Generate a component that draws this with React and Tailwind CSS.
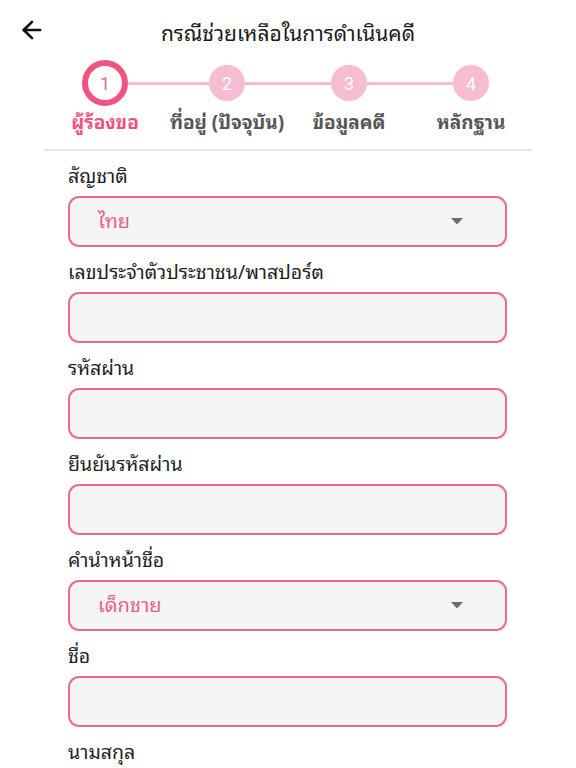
import React from 'react';
import { ArrowLeft } from 'lucide-react';

const steps = [
  { n: 1, label: 'ผู้ร้องขอ' },
  { n: 2, label: 'ที่อยู่ (ปัจจุบัน)' },
  { n: 3, label: 'ข้อมูลคดี' },
  { n: 4, label: 'หลักฐาน' },
];

const fields = [
  { label: 'สัญชาติ', select: 'ไทย' },
  { label: 'เลขประจำตัวประชาชน/พาสปอร์ต' },
  { label: 'รหัสผ่าน' },
  { label: 'ยืนยันรหัสผ่าน' },
  { label: 'คำนำหน้าชื่อ', select: 'เด็กชาย' },
  { label: 'ชื่อ' },
  { label: 'นามสกุล' },
];

const Caret = () => (
  <svg width="12" height="7" viewBox="0 0 12 7" className="mr-[42px]">
    <path d="M0 0 L12 0 L6 6.5 Z" fill="#6b6b6b" />
  </svg>
);

const Field = ({ label, select }) => (
  <div className="mt-[14px]">
    {/* looped thai sits low, so shorter leading lifts it a bit */}
    <div className="h-[26px] leading-[20px] text-[19.5px] text-[#1f1f1f] whitespace-nowrap">{label}</div>
    <div className="mt-[5px] h-[51px] rounded-[11px] border-2 border-[#ec6a91] bg-[#f4f4f4] flex items-center justify-between">
      {select && (
        <>
          <span className="pl-[28px] pb-[6px] text-[20px] leading-[26px] text-[#e9628c]">{select}</span>
          <Caret />
        </>
      )}
    </div>
  </div>
);

export default function App() {
  return (
    <div className="w-[576px] h-[768px] overflow-hidden bg-white font-['Noto_Sans_Thai_Looped','Noto_Sans_Thai',Roboto,sans-serif]">
      {/* header */}
      <div className="grid grid-cols-[64px_1fr_64px]">
        <div className="pl-[18px] pt-[16px]">
          <ArrowLeft size={28} strokeWidth={2.3} color="#111" />
        </div>
        <div className="pt-[22px] h-[48px] text-center text-[21px] leading-[20px] text-[#1a1a1a] whitespace-nowrap">
          กรณีช่วยเหลือในการดำเนินคดี
        </div>
        <div />
      </div>

      {/* stepper */}
      <div className="px-11 mt-[12px]">
        <div className="grid grid-cols-4">
          {steps.map((s, i) => (
            <div key={s.n} className="flex flex-col items-center">
              <div className="w-full h-[46px] flex items-center">
                <div className={`flex-1 h-[3px] ${i === 0 ? 'bg-transparent' : 'bg-[#f6bcd1]'}`} />
                {i === 0 ? (
                  <div className="w-[46px] h-[46px] rounded-full border-[6px] border-[#f2537f] bg-white flex items-center justify-center text-[18px] text-[#ec6a91] font-['Roboto',sans-serif]">
                    {s.n}
                  </div>
                ) : (
                  <div className="w-[36px] h-[36px] rounded-full bg-[#f6bcd1] flex items-center justify-center text-[18px] text-white font-['Roboto',sans-serif]">
                    {s.n}
                  </div>
                )}
                <div className={`flex-1 h-[3px] ${i === 3 ? 'bg-transparent' : 'bg-[#f6bcd1]'}`} />
              </div>
              <div
                className={`mt-[6px] h-[24px] leading-[18px] text-[19px] font-bold whitespace-nowrap ${
                  i === 0 ? 'text-[#f0527f]' : 'text-[#555555]'
                }`}
              >
                {s.label}
              </div>
            </div>
          ))}
        </div>
        <div className="mt-[13px] h-[2px] bg-[#e4e4e4]" />
      </div>

      {/* form */}
      <div className="pl-[68px] pr-[69px]">
        {fields.map((f) => (
          <Field key={f.label} {...f} />
        ))}
      </div>
    </div>
  );
}
